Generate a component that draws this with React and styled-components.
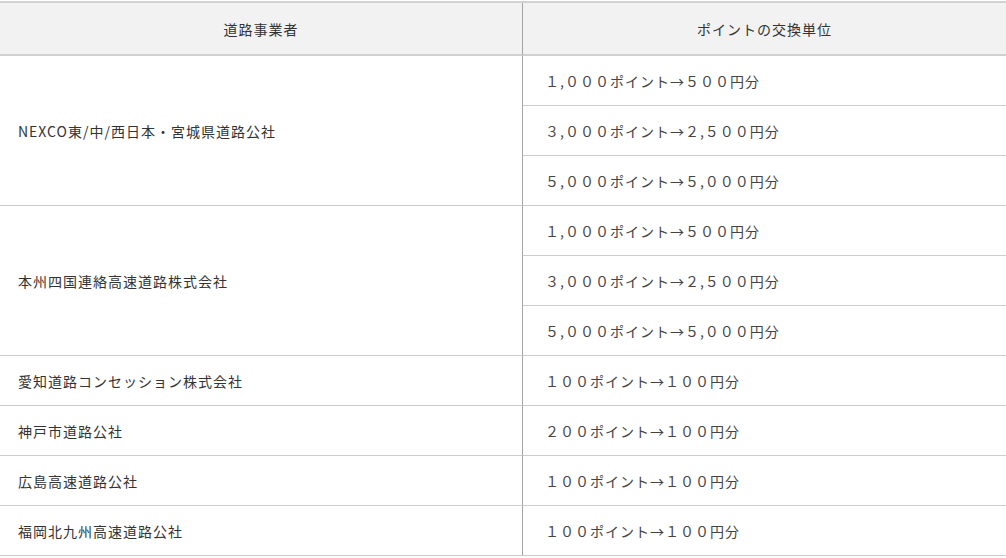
import React from 'react';
import styled, { createGlobalStyle } from 'styled-components';

const GlobalStyle = createGlobalStyle`
  html, body {
    margin: 0;
    padding: 0;
    background: #ffffff;
  }
  body {
    font-family: "Noto Sans CJK JP", "Noto Sans", sans-serif;
    color: #333333;
  }
`;

const Table = styled.table`
  width: 100%;
  margin-top: 1px;
  border-collapse: separate;
  border-spacing: 0;
  border-top: 2px solid #d2d2d2;
  font-size: 14px;
  letter-spacing: 1px;
`;

const HeadCell = styled.th`
  height: 53px;
  padding: 0;
  background: #f2f2f2;
  border-bottom: 2px solid #d0d0d0;
  border-left: ${(p) => (p.$divided ? '1px solid #a4a4a4' : 'none')};
  font-weight: normal;
  text-align: center;
  color: #333333;
  width: ${(p) => (p.$divided ? 'auto' : '522px')};
  box-sizing: border-box;
`;

const NameCell = styled.td`
  height: 49px;
  padding: 0 0 0 18px;
  border-bottom: 1px solid #cccccc;
  vertical-align: middle;
  color: #333333;
`;

const PointCell = styled.td`
  height: 49px;
  padding: 0 0 0 22px;
  border-bottom: 1px solid #cccccc;
  border-left: 1px solid #a4a4a4;
  vertical-align: middle;
  color: #444444;
`;

const rows = [
  {
    name: 'NEXCO東/中/西日本・宮城県道路公社',
    points: ['１,０００ポイント→５００円分', '３,０００ポイント→２,５００円分', '５,０００ポイント→５,０００円分'],
  },
  {
    name: '本州四国連絡高速道路株式会社',
    points: ['１,０００ポイント→５００円分', '３,０００ポイント→２,５００円分', '５,０００ポイント→５,０００円分'],
  },
  { name: '愛知道路コンセッション株式会社', points: ['１００ポイント→１００円分'] },
  { name: '神戸市道路公社', points: ['２００ポイント→１００円分'] },
  { name: '広島高速道路公社', points: ['１００ポイント→１００円分'] },
  { name: '福岡北九州高速道路公社', points: ['１００ポイント→１００円分'] },
];

const App = () => {
  return (
    <>
      <GlobalStyle />
      <Table>
        <thead>
          <tr>
            <HeadCell>道路事業者</HeadCell>
            <HeadCell $divided>ポイントの交換単位</HeadCell>
          </tr>
        </thead>
        <tbody>
          {rows.map((row) =>
            row.points.map((point, i) => (
              <tr key={row.name + i}>
                {i === 0 && <NameCell rowSpan={row.points.length}>{row.name}</NameCell>}
                <PointCell>{point}</PointCell>
              </tr>
            ))
          )}
        </tbody>
      </Table>
    </>
  );
};

export default App;
